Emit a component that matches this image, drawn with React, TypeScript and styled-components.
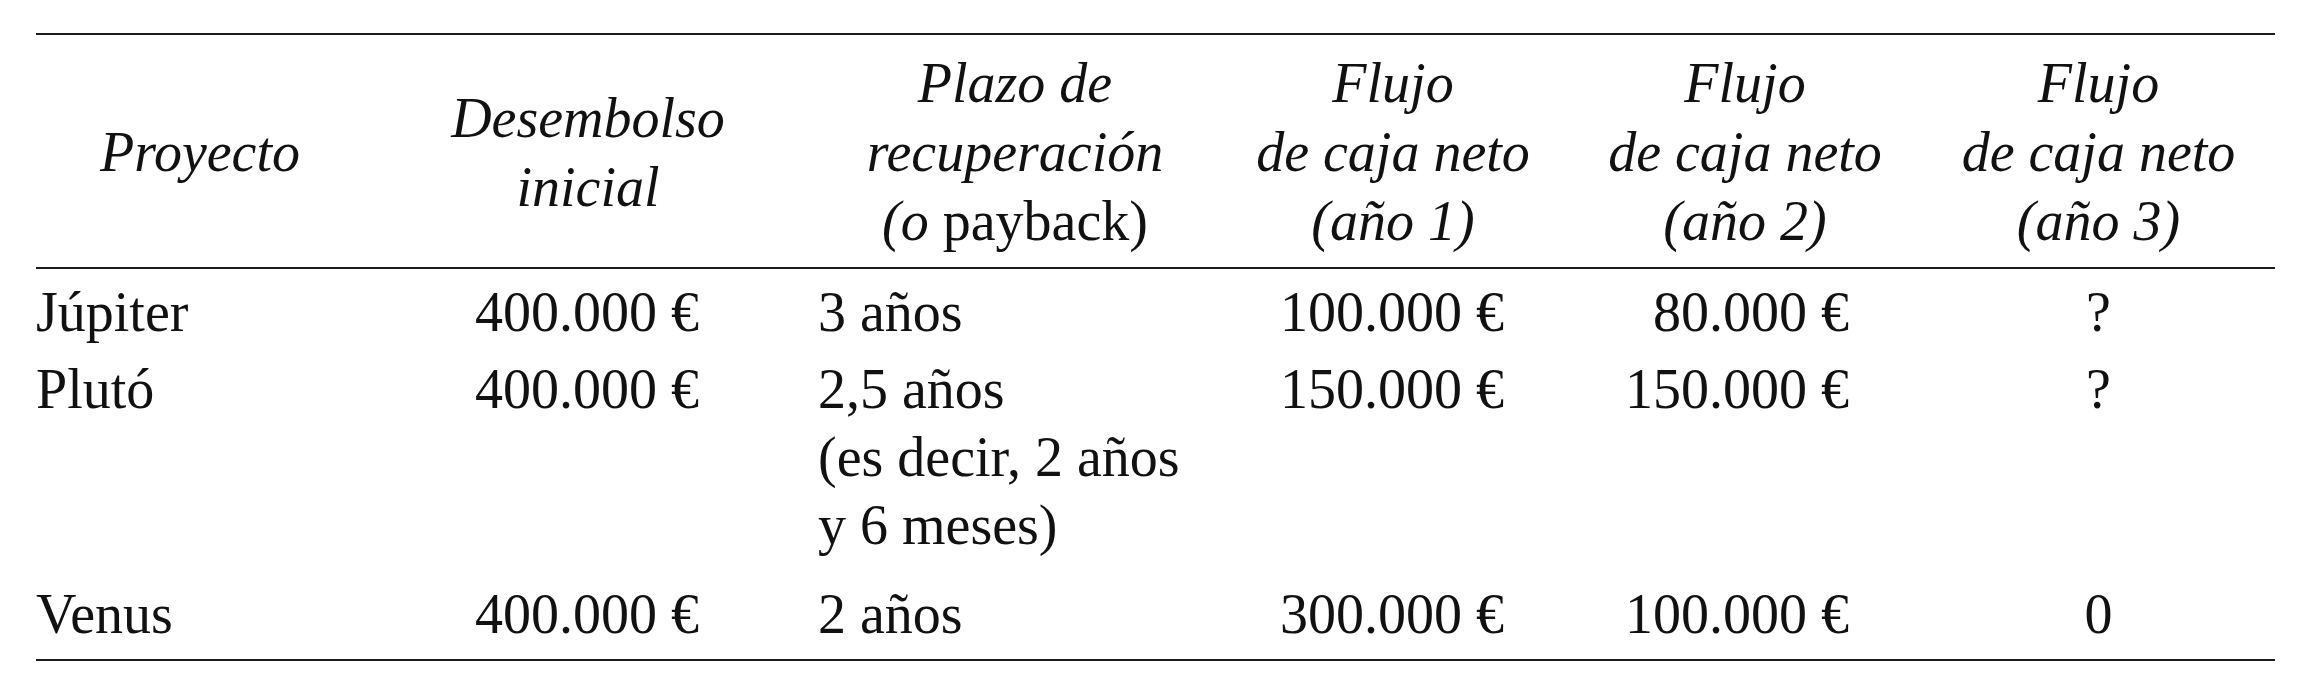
import styled, { createGlobalStyle } from 'styled-components'

const GlobalStyle = createGlobalStyle`
    html, body {
        margin: 0;
        padding: 0;
        background: #ffffff;
    }
    body {
        font-family: "Liberation Serif", "Times New Roman", serif;
        color: #111111;
    }
`

const Page = styled.div`
    padding: 33px 0 0 36px;
`

const Table = styled.table`
    width: 2239px;
    border-collapse: collapse;
    table-layout: fixed;
    border-top: 2px solid #1c1c1c;
    border-bottom: 2px solid #1c1c1c;
    font-size: 56px;
`

const HeadRow = styled.tr`
    border-bottom: 2px solid #1c1c1c;
`

const HeadCell = styled.th`
    font-weight: normal;
    font-style: italic;
    text-align: center;
    vertical-align: middle;
    line-height: 69px;
    padding: 14px 0 11px;
`

const Upright = styled.span`
    font-style: normal;
`

const Row = styled.tr<{ $top: number; $bottom: number }>`
    & > td {
        padding-top: ${p => p.$top}px;
        padding-bottom: ${p => p.$bottom}px;
    }
`

const Cell = styled.td<{ $align?: 'left' | 'right' | 'center'; $padRight?: number; $padLeft?: number }>`
    text-align: ${p => p.$align || 'left'};
    vertical-align: top;
    line-height: 68px;
    padding-left: ${p => p.$padLeft || 0}px;
    padding-right: ${p => p.$padRight || 0}px;
    white-space: nowrap;
`

const columns = [328, 448, 406, 350, 354, 353]

const rows = [
    { name: 'Júpiter', outlay: '400.000 €', payback: ['3 años'], y1: '100.000 €', y2: '80.000 €', y3: '?', top: 9, bottom: 0 },
    { name: 'Plutó', outlay: '400.000 €', payback: ['2,5 años', '(es decir, 2 años', 'y 6 meses)'], y1: '150.000 €', y2: '150.000 €', y3: '?', top: 9, bottom: 0 },
    { name: 'Venus', outlay: '400.000 €', payback: ['2 años'], y1: '300.000 €', y2: '100.000 €', y3: '0', top: 21, bottom: 11 },
]

export default function App() {
    return (
        <>
            <GlobalStyle />
            <Page>
                <Table>
                    <colgroup>
                        {columns.map((w, i) => <col key={i} style={{ width: w }} />)}
                    </colgroup>
                    <thead>
                        <HeadRow>
                            <HeadCell>Proyecto</HeadCell>
                            <HeadCell>Desembolso<br />inicial</HeadCell>
                            <HeadCell>Plazo de<br />recuperación<br />(o <Upright>payback)</Upright></HeadCell>
                            <HeadCell>Flujo<br />de caja neto<br />(año 1)</HeadCell>
                            <HeadCell>Flujo<br />de caja neto<br />(año 2)</HeadCell>
                            <HeadCell>Flujo<br />de caja neto<br />(año 3)</HeadCell>
                        </HeadRow>
                    </thead>
                    <tbody>
                        {rows.map(r => (
                            <Row key={r.name} $top={r.top} $bottom={r.bottom}>
                                <Cell>{r.name}</Cell>
                                <Cell $align="right" $padRight={113}>{r.outlay}</Cell>
                                <Cell $padLeft={6}>
                                    {r.payback.map((line, i) => (
                                        <span key={i}>{i > 0 && <br />}{line}</span>
                                    ))}
                                </Cell>
                                <Cell $align="right" $padRight={64}>{r.y1}</Cell>
                                <Cell $align="right" $padRight={73}>{r.y2}</Cell>
                                <Cell $align="center">{r.y3}</Cell>
                            </Row>
                        ))}
                    </tbody>
                </Table>
            </Page>
        </>
    )
}
